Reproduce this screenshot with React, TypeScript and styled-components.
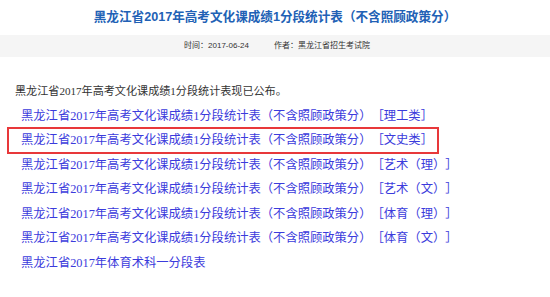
import React from 'react';
import styled, { createGlobalStyle } from 'styled-components';

const GlobalStyle = createGlobalStyle`
  html, body {
    margin: 0;
    padding: 0;
    background: #fff;
  }
`;

const Page = styled.div`
  width: 550px;
  height: 297px;
  overflow: hidden;
  font-family: "Liberation Serif", "Noto Sans CJK SC", serif;
  text-spacing-trim: space-all;
`;

const Title = styled.h1`
  margin: 0;
  height: 35px;
  line-height: 35px;
  text-align: center;
  font-family: "Liberation Sans", "Noto Sans CJK SC", sans-serif;
  font-size: 12.6px;
  font-weight: bold;
  color: #2161b5;
`;

const MetaBar = styled.div`
  display: flex;
  justify-content: center;
  gap: 25px;
  height: 22px;
  line-height: 22px;
  padding-left: 4px;
  background: #f5f5f5;
  font-family: "Liberation Sans", "Noto Sans CJK SC", sans-serif;
  font-size: 8px;
  color: #333;
`;

const Content = styled.div`
  padding: 22px 0 0 15px;
`;

const Intro = styled.p`
  margin: 0;
  line-height: 24.5px;
  font-size: 11.1px;
  color: #333;
`;

const LinkList = styled.ul`
  list-style: none;
  margin: 0;
  padding: 0 0 0 6px;
`;

const Row = styled.li<{ $marked?: boolean }>`
  position: relative;
  line-height: 24.5px;
  font-size: 12.3px;

  ${({ $marked }) =>
    $marked &&
    `
    &::after {
      content: '';
      position: absolute;
      left: -14px;
      top: -1px;
      width: 428px;
      height: 23px;
      border: 2px solid #e8383a;
      pointer-events: none;
    }
  `}
`;

const Anchor = styled.a`
  color: #3b3bdc;
  text-decoration: none;
`;

const base = '黑龙江省2017年高考文化课成绩1分段统计表（不含照顾政策分）';

const links = [
  { text: base + '［理工类］' },
  { text: base + '［文史类］', marked: true },
  { text: base + '［艺术（理）］' },
  { text: base + '［艺术（文）］' },
  { text: base + '［体育（理）］' },
  { text: base + '［体育（文）］' },
  { text: '黑龙江省2017年体育术科一分段表' },
];

export default function App() {
  return (
    <Page>
      <GlobalStyle />
      <Title>黑龙江省2017年高考文化课成绩1分段统计表（不含照顾政策分）</Title>
      <MetaBar>
        <span>时间：2017-06-24</span>
        <span>作者：黑龙江省招生考试院</span>
      </MetaBar>
      <Content>
        <Intro>黑龙江省2017年高考文化课成绩1分段统计表现已公布。</Intro>
        <LinkList>
          {links.map((l, i) => (
            <Row key={i} $marked={l.marked}>
              <Anchor href="#">{l.text}</Anchor>
            </Row>
          ))}
        </LinkList>
      </Content>
    </Page>
  );
}
